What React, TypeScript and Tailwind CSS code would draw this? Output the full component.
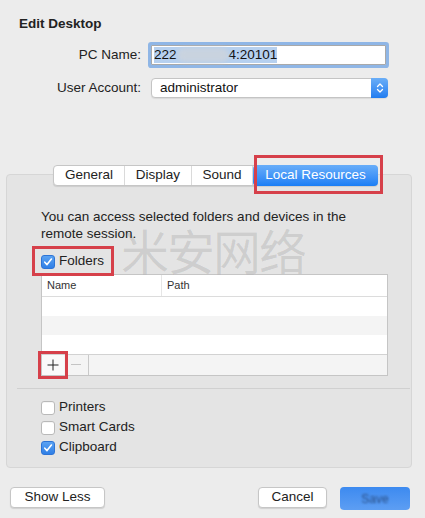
import React from 'react';

const font = { fontFamily: '"Liberation Sans", Arial, sans-serif' };

const Check: React.FC<{ checked?: boolean }> = ({ checked }) =>
  checked ? (
    <span className="w-[14px] h-[14px] rounded-[3px] bg-gradient-to-b from-[#5aa2f2] to-[#2f7fe6] border border-[#2d74d6] flex items-center justify-center shrink-0">
      <svg width="10" height="10" viewBox="0 0 10 10">
        <path d="M1.8 5.2 L4 7.6 L8.4 2" fill="none" stroke="#fff" strokeWidth="1.6" strokeLinecap="round" strokeLinejoin="round" />
      </svg>
    </span>
  ) : (
    <span className="w-[14px] h-[14px] rounded-[3px] bg-white border border-[#b9b9b9] shadow-[inset_0_1px_0_rgba(0,0,0,0.04)] shrink-0" />
  );

const CheckRow: React.FC<{ label: string; checked?: boolean }> = ({ label, checked }) => (
  <div className="flex items-center gap-[4px] h-[20px]">
    <Check checked={checked} />
    <span className="text-[13.5px] text-[#222]">{label}</span>
  </div>
);

const tabs = [
  { name: 'General', w: 'w-[71px]' },
  { name: 'Display', w: 'w-[67px]' },
  { name: 'Sound', w: 'w-[61px]' },
];

export default function App() {
  return (
    <div className="relative w-[425px] h-[518px] bg-[#ececec] overflow-hidden" style={font}>
      <div className="pt-[16px] pl-[19px] text-[13.5px] font-bold leading-[16px] text-[#222]">Edit Desktop</div>

      {/* form rows */}
      <div className="mt-[13px] grid grid-cols-[141px_1fr] gap-x-[10px] gap-y-[13px] items-center">
        <div className="text-right text-[13.5px] text-[#222]">PC Name:</div>
        <div className="w-[235px] h-[20px] bg-white border border-[#a9a9a9] ring-[3px] ring-[#8fb6e6] rounded-[1px] flex items-center pl-[2px] text-[13.5px] text-[#111]">
          <span className="bg-[#b6d0ef] flex items-center h-[16px] leading-[16px]">
            222
            <span className="inline-block w-[52px] h-[14px] rounded-full bg-[#c9d3df] blur-[2px]" />
            4:20101
          </span>
        </div>

        <div className="text-right text-[13.5px] text-[#222]">User Account:</div>
        <div className="w-[237px] h-[20px] bg-white border border-[#c4c4c4] rounded-[4px] shadow-[0_1px_1px_rgba(0,0,0,0.08)] flex items-center">
          <span className="flex-1 pl-[8px] text-[13.5px] text-[#111]">administrator</span>
          <span className="w-[17px] h-[20px] -mr-px rounded-r-[4px] bg-gradient-to-b from-[#6aaef7] to-[#1f7cf0] flex items-center justify-center">
            <svg width="8" height="12" viewBox="0 0 8 12">
              <path d="M1.5 4.5 L4 2 L6.5 4.5 M1.5 7.5 L4 10 L6.5 7.5" fill="none" stroke="#fff" strokeWidth="1.3" strokeLinecap="round" strokeLinejoin="round" />
            </svg>
          </span>
        </div>
      </div>

      {/* group box */}
      <div className="mt-[75px] ml-[6px] w-[406px] bg-[#e4e4e4] border border-[#d6d6d6] rounded-[4px]">
        <div className="-mt-[10px] ml-[46px] flex">
          <div className="flex h-[21px] bg-white border border-[#c6c6c6] rounded-[4px] shadow-[0_1px_1px_rgba(0,0,0,0.1)] text-[13.5px] text-[#222]">
            {tabs.map((t) => (
              <div key={t.name} className={`${t.w} flex items-center justify-center border-r border-[#dadada]`}>
                {t.name}
              </div>
            ))}
            <div className="relative w-[125px] -my-px -mr-px">
              <div className="h-full rounded-[4px] bg-gradient-to-b from-[#67adf9] to-[#1a7ef5] text-white flex items-center justify-center">
                Local Resources
              </div>
              <div className="absolute left-[1px] -top-[10px] -right-[5px] -bottom-[8px] border-[3px] border-[#d6404a]" />
            </div>
          </div>
        </div>

        <div className="pl-[34px] mt-[22px] text-[13.5px] leading-[17px] text-[#222]">
          You can access selected folders and devices in the
          <br />
          remote session.
        </div>

        <div className="pl-[34px] mt-[12px]">
          <div className="relative flex w-fit items-center gap-[4px] h-[16px]">
            <Check checked />
            <span className="text-[13.5px] text-[#222]">Folders</span>
            <div className="absolute -left-[9px] -top-[8px] -right-[10px] -bottom-[6px] border-[3px] border-[#d6404a]" />
          </div>
        </div>

        {/* table */}
        <div className="ml-[34px] mt-[4px] w-[347px] border border-[#c5c5c5] bg-white text-[11px] text-[#333]">
          <div className="flex h-[22px] border-b border-[#dcdcdc]">
            <div className="w-[120px] pl-[5px] flex items-center border-r border-[#e6e6e6]">Name</div>
            <div className="flex-1 pl-[5px] flex items-center">Path</div>
          </div>
          <div className="h-[19px] bg-white" />
          <div className="h-[19px] bg-[#f4f4f4]" />
          <div className="h-[19px] bg-white" />
          <div className="flex h-[21px] border-t border-[#d2d2d2] bg-[#f4f4f4]">
            <div className="relative w-[22px] flex items-center justify-center bg-[#fafafa]">
              <svg width="12" height="12" viewBox="0 0 12 12">
                <path d="M6 0.5 V11.5 M0.5 6 H11.5" stroke="#222" strokeWidth="1" />
              </svg>
              <div className="absolute -left-[4px] -top-[4px] -right-[4px] -bottom-[4px] border-[3px] border-[#d6404a]" />
            </div>
            <div className="w-[24px] flex items-center justify-center">
              <div className="w-[10px] h-px bg-[#c4c4c4]" />
            </div>
            <div className="flex-1 border-l border-[#c9c9c9]" />
          </div>
        </div>

        <div className="mt-[12px] ml-[10px] mr-[1px] h-px bg-[#d0d0d0]" />

        <div className="pl-[34px] mt-[9px] pb-[9px]">
          <CheckRow label="Printers" />
          <CheckRow label="Smart Cards" />
          <CheckRow label="Clipboard" checked />
        </div>
      </div>

      {/* buttons */}
      <div className="mt-[19px] flex items-start pl-[10px] pr-[15px] text-[13.5px] text-[#222]">
        <div className="w-[95px] h-[21px] bg-white border border-[#c6c6c6] rounded-[4px] shadow-[0_1px_1px_rgba(0,0,0,0.12)] flex items-center justify-center">
          Show Less
        </div>
        <div className="flex-1" />
        <div className="w-[69px] h-[21px] bg-white border border-[#c6c6c6] rounded-[4px] shadow-[0_1px_1px_rgba(0,0,0,0.12)] flex items-center justify-center">
          Cancel
        </div>
        <div className="ml-[13px] w-[70px] h-[23px] rounded-[4px] bg-gradient-to-b from-[#3c8af0] to-[#5d9ef3] flex items-start justify-center pt-[3px]">
          <span className="text-[#2a4f86] text-[12px] blur-[1px]">Save</span>
        </div>
      </div>

      {/* watermark */}
      <div
        className="absolute left-[121px] top-[222px] text-[48px] leading-[54px] tracking-[-2px] text-black/10 pointer-events-none"
        style={{ fontFamily: '"Noto Sans CJK SC", sans-serif' }}
      >
        米安网络
      </div>
    </div>
  );
}
